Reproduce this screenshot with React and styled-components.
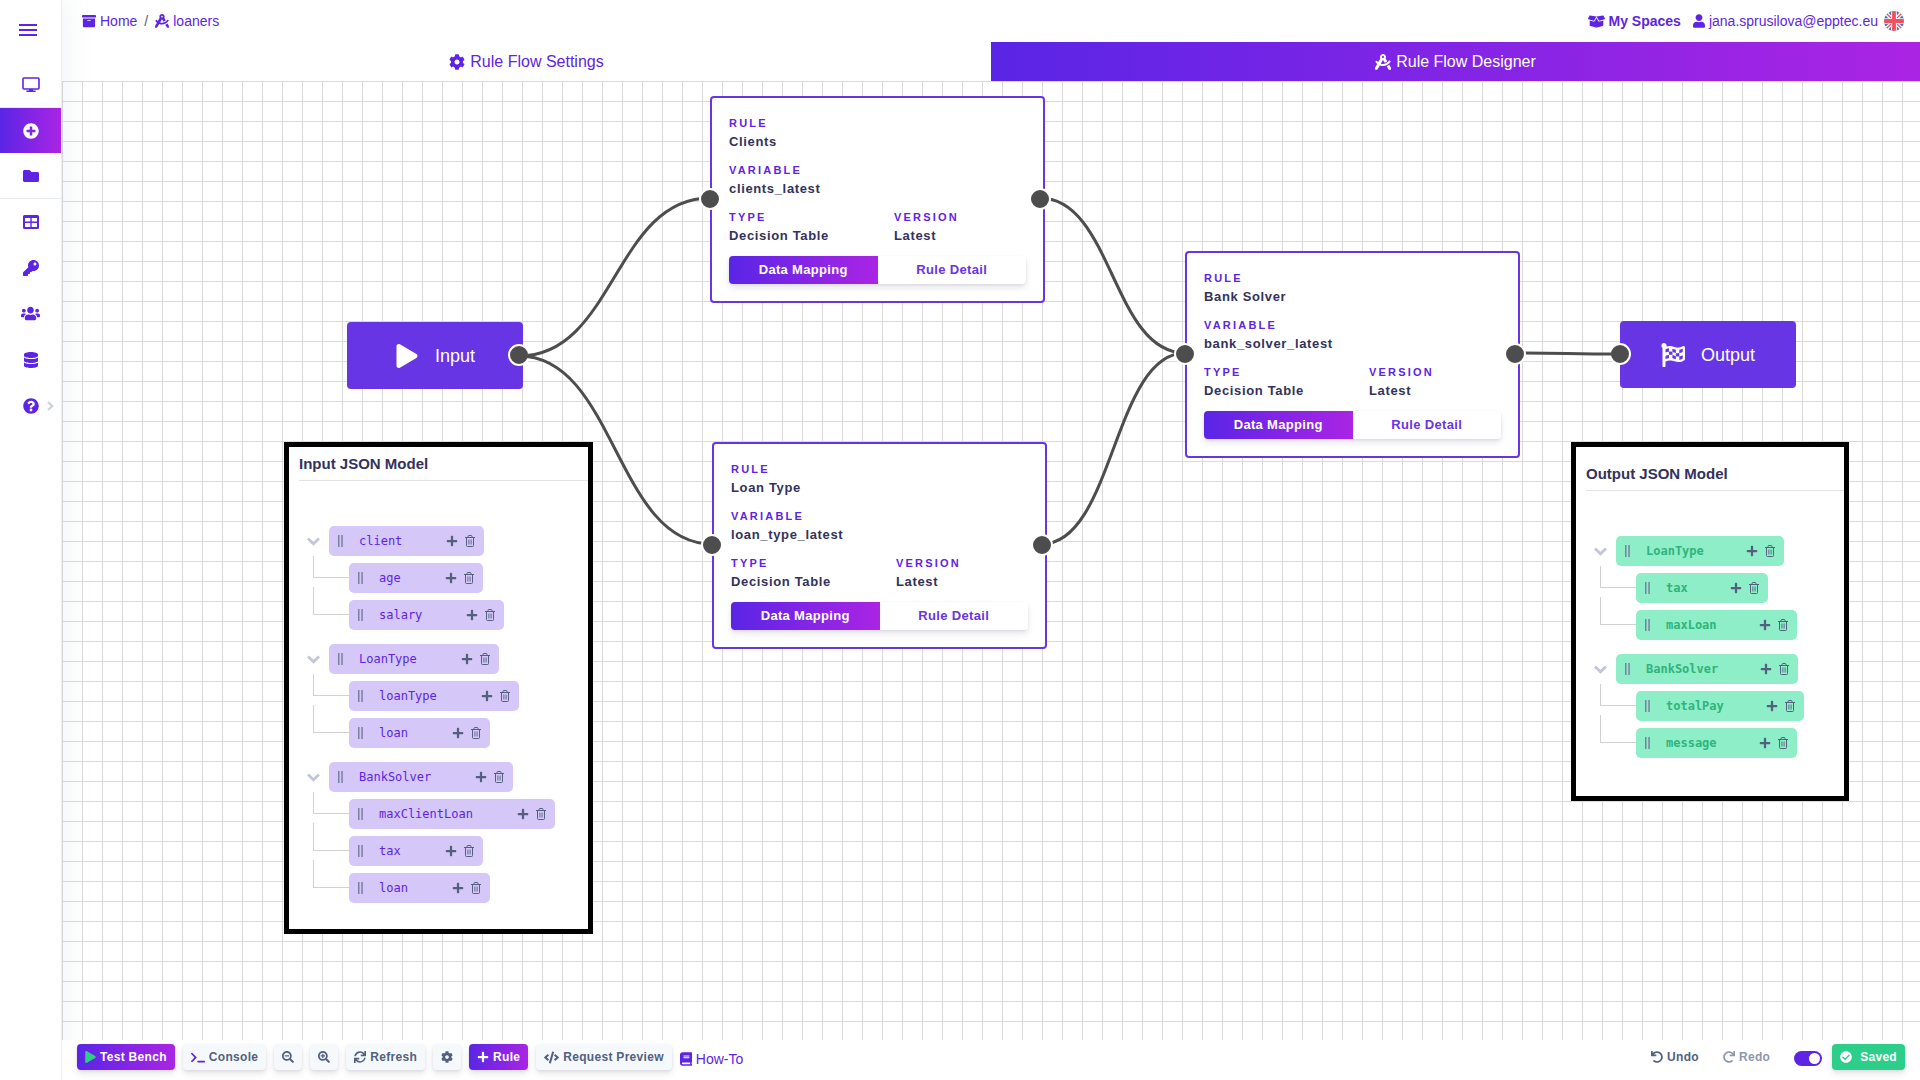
import React from "react";
import styled, { createGlobalStyle, css } from "styled-components";
import {
  FaArchive, FaDraftingCompass, FaBoxOpen, FaUser, FaCog, FaPlusCircle, FaFolder,
  FaKey, FaUsers, FaDatabase, FaQuestionCircle,
  FaPlay, FaFlagCheckered, FaPlus, FaTerminal, FaSearchMinus,
  FaSearchPlus, FaSync, FaCode, FaBook, FaUndo, FaRedo, FaCheckCircle,
} from "react-icons/fa";

const c = {
  primary: "#5e24e4",
  node: "#6835e4",
  gradient: "linear-gradient(90deg, #5a25e6 0%, #ab24e4 100%)",
  ink: "#32325d",
  slate: "#525f7f",
  wire: "#4d4d4d",
  green: "#2dce89",
  grid: "#dadada",
};

const Global = createGlobalStyle`
  * { box-sizing: border-box; }
  body { margin: 0; background: #fff; font-family: "Liberation Sans", Arial, sans-serif; font-size: 14px; color: ${c.slate}; }
  button, input { font: inherit; margin: 0; }
  button { border: 0; padding: 0; background: none; cursor: pointer; color: inherit; }
  a { color: ${c.primary}; text-decoration: none; }
  svg { flex: none; }
`;

const Shell = styled.div`
  display: flex;
  height: 100vh;
`;

/* Sidebar */
const Sidebar = styled.nav`
  flex: none;
  width: 62px;
  z-index: 1;
  background: #fff;
  border-right: 1px solid #ebedf0;
  box-shadow: 0 0 32px rgba(136, 152, 170, 0.15);
  display: flex;
  flex-direction: column;
`;
const MenuButton = styled.button`
  height: 62px;
  padding: 0 5px 2px 0;
  color: ${c.primary};
  display: grid;
  place-items: center;
`;
const SideGroup = styled.div`
  display: grid;
  & + & { border-top: 1px solid #e9ecef; }
  &:last-child { gap: 1px; }
`;
const SideLink = styled.a`
  height: 45px;
  display: grid;
  grid-template-columns: 1fr 20px 1fr;
  align-items: center;
  justify-items: center;
  font-size: 16px;
  color: ${(p) => (p.$active ? "#fff" : c.primary)};
  background: ${(p) => (p.$active ? c.gradient : "none")};
  & > svg:first-child { grid-column: 2; }
`;

/* Main area */
const Main = styled.div`
  flex: 1;
  min-width: 0;
  display: flex;
  flex-direction: column;
`;
const TopBar = styled.header`
  flex: none;
  height: 42px;
  padding: 0 16px 0 20px;
  display: flex;
  align-items: center;
  justify-content: space-between;
`;
const BarGroup = styled.div`
  display: flex;
  align-items: center;
  gap: ${(p) => p.$gap}px;
`;
const IconLink = styled.a`
  display: flex;
  align-items: center;
  gap: 4px;
  font-weight: ${(p) => (p.$bold ? 700 : 400)};
  & > svg { width: ${(p) => p.$iconWidth || 14}px; }
`;
const LangButton = styled.button`
  display: grid;
`;
const Tabs = styled.nav`
  flex: none;
  display: grid;
  grid-template-columns: 1fr 1fr;
  height: 39px;
`;
const Tab = styled.a`
  display: flex;
  align-items: center;
  justify-content: center;
  gap: 5px;
  font-size: 16px;
  color: ${(p) => (p.$active ? "#fff" : c.primary)};
  background: ${(p) => (p.$active ? c.gradient : "none")};
`;

/* Canvas */
const Canvas = styled.main`
  flex: 1;
  min-height: 0;
  position: relative;
  overflow: hidden;
  background-image: linear-gradient(${c.grid} 1px, transparent 1px),
    linear-gradient(90deg, ${c.grid} 1px, transparent 1px);
  background-size: 20px 20px;
`;
const Wires = styled.svg`
  position: absolute;
  inset: 0;
  width: 100%;
  height: 100%;
  fill: none;
  stroke: ${c.wire};
  stroke-width: 3;
`;
const placed = css`
  position: absolute;
  left: ${(p) => p.$x}px;
  top: ${(p) => p.$y}px;
`;
const Port = styled.span`
  position: absolute;
  top: 50%;
  ${(p) => p.$side}: ${(p) => p.$inset - 11}px;
  width: 22px;
  height: 22px;
  margin-top: -12px;
  border-radius: 50%;
  border: 2px solid #fff;
  background: ${c.wire};
`;
const Terminal = styled.section`
  ${placed}
  width: 176px;
  height: 67px;
  padding-top: 1px;
  border-radius: 4px;
  background: ${c.node};
  color: #fff;
  display: flex;
  align-items: center;
  justify-content: center;
  gap: 16px;
  font-size: 18px;
  & > svg { font-size: 24px; }
`;
const Card = styled.article`
  ${placed}
  width: 335px;
  padding: 17px;
  border: 2px solid ${c.node};
  border-radius: 4px;
  background: #fff;
  display: grid;
  gap: 9px;
`;
const FieldPair = styled.div`
  display: grid;
  grid-template-columns: 5fr 4fr;
`;
const FieldLabel = styled.div`
  font-size: 11px;
  font-weight: 700;
  line-height: 16px;
  letter-spacing: 0.2em;
  text-transform: uppercase;
  color: ${c.primary};
`;
const FieldValue = styled.div`
  font-size: 13px;
  font-weight: 700;
  line-height: 22px;
  letter-spacing: 0.05em;
  color: ${c.ink};
`;
const Split = styled.div`
  display: flex;
  height: 28px;
  border-radius: 4px;
  box-shadow: 0 4px 6px rgba(50, 50, 93, 0.11), 0 1px 3px rgba(0, 0, 0, 0.08);
`;
const SplitButton = styled.button`
  flex: 1;
  padding-bottom: 2px;
  font-size: 13px;
  font-weight: 700;
  letter-spacing: 0.025em;
  color: ${(p) => (p.$primary ? "#fff" : c.node)};
  background: ${(p) => (p.$primary ? c.gradient : "#fff")};
  border-radius: ${(p) => (p.$primary ? "4px 0 0 4px" : "0 4px 4px 0")};
`;

/* JSON model panels */
const Panel = styled.section`
  ${placed}
  width: ${(p) => p.$width}px;
  padding: ${(p) => (p.$roomy ? "18px 0 38px 10px" : "8px 0 26px 10px")};
  border: 5px solid #000;
  background: #fff;
`;
const PanelTitle = styled.h2`
  margin: 0 0 45px;
  padding-bottom: 8px;
  border-bottom: 1px solid #e3e3e3;
  font-size: 15px;
  line-height: 17px;
  color: ${c.ink};
`;
const Tree = styled.div`
  display: grid;
  gap: 14px;
  padding-left: 8px;
`;
const Branch = styled.div`
  display: grid;
  gap: 7px;
`;
const TreeRow = styled.div`
  display: flex;
  align-items: center;
`;
const Toggle = styled.button`
  width: 22px;
  height: 30px;
  color: #c1c7d6;
  display: flex;
  align-items: center;
`;
const Elbow = styled.span`
  flex: none;
  align-self: flex-start;
  width: 36px;
  height: ${(p) => (p.$first ? 22 : 28)}px;
  margin: ${(p) => (p.$first ? -7 : -13)}px 0 0 6px;
  border: solid #d2d2d2;
  border-width: 0 0 1px 1px;
`;
const Chip = styled.div`
  height: 30px;
  padding: 0 9px;
  border-radius: 5px;
  display: flex;
  align-items: center;
  background: ${(p) => (p.$green ? "#8eeec8" : "#d5c7f8")};
  color: ${c.slate};
`;
const ChipName = styled.span`
  margin: 0 ${(p) => (p.$green ? 42 : 44)}px 0 16px;
  font-family: "DejaVu Sans Mono", monospace;
  font-size: 12px;
  font-weight: ${(p) => (p.$green ? 700 : 400)};
  color: ${(p) => (p.$green ? "#2fb47c" : c.primary)};
`;
const ChipAction = styled.button`
  display: grid;
  font-size: 12px;
  & + & { margin-left: 7px; }
`;

/* Bottom toolbar */
const Toolbar = styled.footer`
  flex: none;
  z-index: 2;
  height: 40px;
  padding: 4px 15px 10px;
  background: #fff;
  display: flex;
  justify-content: space-between;
`;
const tones = {
  plain: ["transparent", c.slate],
  light: ["#f6f9fc", c.slate],
  primary: [c.gradient, "#fff"],
  success: [c.green, "#fff"],
};
const ToolButton = styled.button`
  height: 26px;
  padding: 0 8px;
  border-radius: 4px;
  display: flex;
  align-items: center;
  gap: ${(p) => (p.$tone === "success" ? 8 : 4)}px;
  font-size: 12px;
  font-weight: 700;
  letter-spacing: 0.025em;
  white-space: nowrap;
  background: ${(p) => tones[p.$tone][0]};
  color: ${(p) => tones[p.$tone][1]};
  box-shadow: ${(p) => (p.$tone === "plain" ? "none" : "0 4px 6px rgba(50, 50, 93, 0.11), 0 1px 3px rgba(0, 0, 0, 0.08)")};
  &:disabled { opacity: 0.65; cursor: default; }
  & > svg {
    width: ${(p) => p.$iconWidth || 12}px;
    color: ${(p) => p.$icon || "inherit"};
  }
`;
const HowTo = styled(IconLink)`
  padding-top: 4px;
`;
const Switch = styled.input`
  appearance: none;
  width: 28px;
  height: 15px;
  margin: 2px 2px 0 8px;
  padding: 2px;
  border-radius: 8px;
  background: #cbd1dc;
  display: flex;
  &::before { content: ""; width: 11px; height: 11px; border-radius: 50%; background: #fff; }
  &:checked { background: ${c.primary}; justify-content: flex-end; }
`;

const MenuIcon = () => (
  <svg width="18" height="12" viewBox="0 0 18 12" fill="currentColor">
    <path d="M0 0h18v2H0zM0 5h18v2H0zM0 10h18v2H0z" />
  </svg>
);
const ScreenIcon = () => (
  <svg width="18" height="16" viewBox="0 0 18 16">
    <rect x="1" y="1" width="16" height="11" rx="1" fill="none" stroke="currentColor" strokeWidth="1.6" />
    <path d="M7 12h4v1.6h2.6V15H4.4v-1.4H7z" fill="currentColor" />
  </svg>
);
const TableIcon = () => (
  <svg width="16" height="14" viewBox="0 0 16 14" fill="currentColor" fillRule="evenodd">
    <path d="M1.500 0h13A1.500 1.500 0 0 1 16 1.500v11a1.500 1.500 0 0 1-1.500 1.500h-13A1.500 1.500 0 0 1 0 12.500v-11A1.500 1.500 0 0 1 1.500 0zM2 3v3.500h5.300V3zM8.700 3v3.500H14V3zM2 8v4h5.300V8zM8.700 8v4H14V8z" />
  </svg>
);
const UsersIcon = () => <FaUsers size={19} />;
const ChevronDown = () => (
  <svg width="13" height="9" viewBox="0 0 13 9" fill="none" stroke="currentColor" strokeWidth="2.800">
    <path d="M1 1.500l5.500 5.200L12 1.500" />
  </svg>
);
const ChevronRight = () => (
  <svg width="7" height="10" viewBox="0 0 7 10" fill="none" stroke="#ced4da" strokeWidth="2.400">
    <path d="M1 1l4.200 4L1 9" />
  </svg>
);
const Grip = () => (
  <svg width="5" height="12" viewBox="0 0 5 12" fill="#7a80a0">
    <path d="M0 0h1.500v12H0zM3.300 0h1.500v12H3.300z" />
  </svg>
);
const TrashIcon = () => (
  <svg width="10" height="12" viewBox="0 0 10 12" fill="none" stroke="currentColor">
    <path d="M0 2.500h10M3 2.200V1.500a1 1 0 0 1 1-1h2a1 1 0 0 1 1 1v.7M1.500 2.500v8a1 1 0 0 0 1 1h5a1 1 0 0 0 1-1v-8" />
    <path d="M3.900 4.500v5M6.100 4.500v5" strokeWidth=".9" />
  </svg>
);
const FlagIcon = () => (
  <svg width="20" height="20" viewBox="0 0 20 20">
    <defs><clipPath id="disc"><circle cx="10" cy="10" r="10" /></clipPath></defs>
    <g clipPath="url(#disc)">
      <rect width="20" height="20" fill="#3f6fb0" />
      <path d="M0 0l20 20M20 0L0 20" stroke="#fff" strokeWidth="4" />
      <path d="M0 0l20 20M20 0L0 20" stroke="#f0505f" strokeWidth="1.300" />
      <path d="M10 0v20M0 10h20" stroke="#fff" strokeWidth="5.600" />
      <path d="M10 0v20M0 10h20" stroke="#f0505f" strokeWidth="3.800" />
    </g>
  </svg>
);

const sideGroups = [
  [{ label: "Dashboard", icon: ScreenIcon }],
  [{ label: "Create", icon: FaPlusCircle, active: true }, { label: "Files", icon: FaFolder }],
  [
    { label: "Tables", icon: TableIcon },
    { label: "Keys", icon: FaKey },
    { label: "Users", icon: UsersIcon },
    { label: "Data", icon: FaDatabase },
    { label: "Help", icon: FaQuestionCircle, more: true },
  ],
];

const rules = [
  { x: 648, y: 15, name: "Clients", variable: "clients_latest" },
  { x: 650, y: 361, name: "Loan Type", variable: "loan_type_latest" },
  { x: 1123, y: 170, name: "Bank Solver", variable: "bank_solver_latest" },
];

const wires = [
  [457, 275, 648, 117],
  [457, 275, 650, 463],
  [978, 117, 1123, 272],
  [980, 463, 1123, 272],
  [1453, 272, 1558, 273],
];

const inputModel = [
  { name: "client", children: ["age", "salary"] },
  { name: "LoanType", children: ["loanType", "loan"] },
  { name: "BankSolver", children: ["maxClientLoan", "tax", "loan"] },
];
const outputModel = [
  { name: "LoanType", children: ["tax", "maxLoan"] },
  { name: "BankSolver", children: ["totalPay", "message"] },
];

function curve([x1, y1, x2, y2]) {
  const mid = (x1 + x2) / 2;
  return `M${x1} ${y1}C${mid} ${y1} ${mid} ${y2} ${x2} ${y2}`;
}

function Field({ label, value }) {
  return (
    <div>
      <FieldLabel>{label}</FieldLabel>
      <FieldValue>{value}</FieldValue>
    </div>
  );
}

function RuleCard({ rule }) {
  return (
    <Card $x={rule.x} $y={rule.y}>
      <Field label="Rule" value={rule.name} />
      <Field label="Variable" value={rule.variable} />
      <FieldPair>
        <Field label="Type" value="Decision Table" />
        <Field label="Version" value="Latest" />
      </FieldPair>
      <Split>
        <SplitButton $primary>Data Mapping</SplitButton>
        <SplitButton>Rule Detail</SplitButton>
      </Split>
      <Port $side="left" $inset={-2} />
      <Port $side="right" $inset={3} />
    </Card>
  );
}

function ModelChip({ name, green }) {
  return (
    <Chip $green={green}>
      <Grip />
      <ChipName $green={green}>{name}</ChipName>
      <ChipAction aria-label={`Add to ${name}`}><FaPlus /></ChipAction>
      <ChipAction aria-label={`Delete ${name}`}><TrashIcon /></ChipAction>
    </Chip>
  );
}

function ModelPanel({ title, model, green, ...place }) {
  return (
    <Panel {...place}>
      <PanelTitle>{title}</PanelTitle>
      <Tree>
        {model.map((group) => (
          <Branch key={group.name}>
            <TreeRow>
              <Toggle aria-label={`Collapse ${group.name}`}><ChevronDown /></Toggle>
              <ModelChip name={group.name} green={green} />
            </TreeRow>
            {group.children.map((child, i) => (
              <TreeRow key={child}>
                <Elbow $first={i === 0} />
                <ModelChip name={child} green={green} />
              </TreeRow>
            ))}
          </Branch>
        ))}
      </Tree>
    </Panel>
  );
}

export default function App() {
  return (
    <Shell>
      <Global />
      <Sidebar>
        <MenuButton aria-label="Menu"><MenuIcon /></MenuButton>
        {sideGroups.map((group, i) => (
          <SideGroup key={i}>
            {group.map(({ label, icon: Icon, active, more }) => (
              <SideLink key={label} href="#" aria-label={label} $active={active}>
                <Icon />
                {more && <ChevronRight />}
              </SideLink>
            ))}
          </SideGroup>
        ))}
      </Sidebar>
      <Main>
        <TopBar>
          <BarGroup $gap={7}>
            <IconLink href="#"><FaArchive />Home</IconLink>
            <span>/</span>
            <IconLink href="#"><FaDraftingCompass />loaners</IconLink>
          </BarGroup>
          <BarGroup $gap={12}>
            <IconLink href="#" $bold $iconWidth={17}><FaBoxOpen size={17} />My Spaces</IconLink>
            <BarGroup $gap={6}>
              <IconLink href="#" $iconWidth={12}><FaUser />jana.sprusilova@epptec.eu</IconLink>
              <LangButton aria-label="Language"><FlagIcon /></LangButton>
            </BarGroup>
          </BarGroup>
        </TopBar>
        <Tabs>
          <Tab href="#"><FaCog />Rule Flow Settings</Tab>
          <Tab href="#" $active><FaDraftingCompass />Rule Flow Designer</Tab>
        </Tabs>
        <Canvas>
          <Terminal $x={285} $y={241}>
            <FaPlay />Input
            <Port $side="right" $inset={4} />
          </Terminal>
          <Terminal $x={1558} $y={240}>
            <FaFlagCheckered />Output
            <Port $side="left" $inset={0} />
          </Terminal>
          <Wires>
            {wires.map((w) => <path key={w.join()} d={curve(w)} />)}
          </Wires>
          {rules.map((rule) => <RuleCard key={rule.name} rule={rule} />)}
          <ModelPanel title="Input JSON Model" model={inputModel} $x={222} $y={361} $width={309} />
          <ModelPanel title="Output JSON Model" model={outputModel} green $x={1509} $y={361} $width={278} $roomy />
        </Canvas>
        <Toolbar>
          <BarGroup $gap={8}>
            <ToolButton $tone="primary" $icon={c.green} $iconWidth={11}><FaPlay />Test Bench</ToolButton>
            <ToolButton $tone="light" $icon={c.primary} $iconWidth={14}><FaTerminal size={15} />Console</ToolButton>
            <ToolButton $tone="light" aria-label="Zoom out"><FaSearchMinus /></ToolButton>
            <ToolButton $tone="light" aria-label="Zoom in"><FaSearchPlus /></ToolButton>
            <ToolButton $tone="light"><FaSync />Refresh</ToolButton>
            <ToolButton $tone="light" aria-label="Settings"><FaCog /></ToolButton>
            <ToolButton $tone="primary"><FaPlus />Rule</ToolButton>
            <ToolButton $tone="light" $iconWidth={15}><FaCode size={15} />Request Preview</ToolButton>
            <HowTo href="#" $iconWidth={12}><FaBook />How-To</HowTo>
          </BarGroup>
          <BarGroup $gap={8}>
            <ToolButton $tone="plain"><FaUndo />Undo</ToolButton>
            <ToolButton $tone="plain" disabled><FaRedo />Redo</ToolButton>
            <Switch type="checkbox" defaultChecked aria-label="Autosave" />
            <ToolButton $tone="success"><FaCheckCircle />Saved</ToolButton>
          </BarGroup>
        </Toolbar>
      </Main>
    </Shell>
  );
}
